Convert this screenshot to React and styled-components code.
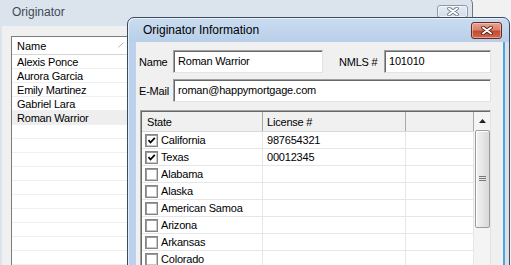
import React from 'react';
import styled, { createGlobalStyle } from 'styled-components';

const Global = createGlobalStyle`
  html, body { margin: 0; padding: 0; }
  body {
    width: 511px; height: 265px; overflow: hidden;
    background: #f0f0f0;
    font-family: "Liberation Sans", Arial, sans-serif;
    font-size: 11px; color: #000;
  }
`;

const Desktop = styled.div`
  position: relative;
  width: 511px; height: 265px;
  overflow: hidden;
  background: #f1f1f1;
`;

const Window = styled.div`
  position: absolute;
  left: ${p => p.$left}px; top: ${p => p.$top}px;
  width: ${p => p.$width}px; height: ${p => p.$height}px;
  box-sizing: border-box;
  border: 1px solid ${p => (p.$active ? '#3a4b60' : '#6e7884')};
  border-radius: 7px 7px 0 0;
  background: ${p => (p.$active
    ? 'linear-gradient(#cadcf0 0px, #b8cfe9 24px) top / 100% 24px no-repeat, linear-gradient(90deg, #bcd2ec 0 8px, #dcdfe3 8px)'
    : '#dbe4ed')};
  box-shadow: inset 1px 1px 0 rgba(255,255,255,0.6);
  display: flex; flex-direction: column;
  padding: 0 ${p => p.$frameR}px 0 ${p => p.$frameL}px;
`;

const TitleBar = styled.div`
  height: ${p => p.$h}px;
  flex: none;
  display: flex; align-items: center;
  padding-left: ${p => p.$pad}px;
  font-size: 12px;
  color: ${p => (p.$active ? '#000' : '#404a56')};
`;

const CloseBtn = styled.div`
  position: absolute;
  right: ${p => p.$right}px; top: ${p => p.$top}px;
  width: ${p => p.$w}px; height: ${p => p.$h}px;
  box-sizing: border-box;
  border-radius: 3px;
  border: 1px solid ${p => (p.$active ? '#6b2a20' : '#8d99a6')};
  background: ${p => (p.$active
    ? 'linear-gradient(#e5a393 0%, #d9826f 45%, #c34a32 55%, #cf6a4f 100%)'
    : 'linear-gradient(#e4ebf2, #d3dde8)')};
  box-shadow: inset 0 0 0 1px ${p => (p.$active ? 'rgba(255,220,210,0.5)' : 'rgba(255,255,255,0.6)')};
  display: flex; align-items: center; justify-content: center;
`;

const Content = styled.div`
  flex: 1;
  background: #f0f0f0;
  display: flex; flex-direction: column;
  padding: ${p => p.$pad};
  border-right: ${p => (p.$edge ? '2px solid #4ea3e2' : 'none')};
`;

/* background list */
const List = styled.div`
  width: 130px;
  flex: 1;
  background: #fff;
  border: 1px solid #7c7c7c;
  box-shadow: inset 1px 1px 0 #a0a0a0;
  display: flex; flex-direction: column;
`;

const ListHeader = styled.div`
  position: relative;
  height: 18px;
  box-sizing: border-box;
  border-bottom: 1px solid #d5d5d5;
  display: flex; align-items: center;
  padding-left: 5px;
  background: #fff;
`;

const SortMark = styled.svg`
  position: absolute;
  left: 106px; top: 5px;
`;

const ListRow = styled.div`
  height: 14px;
  box-sizing: border-box;
  border-bottom: 1px solid #efefef;
  padding-left: 5px;
  display: flex; align-items: center;
  letter-spacing: -0.2px;
  background: ${p => (p.$selected ? '#eeeeee' : '#fff')};
`;

/* form */
const FormRow = styled.div`
  display: flex; align-items: center;
  height: 23px;
  margin-top: ${p => p.$mt || 0}px;
`;

const Label = styled.div`
  width: ${p => p.$w}px;
  margin-left: ${p => p.$ml || 0}px;
  flex: none;
  letter-spacing: -0.2px;
`;

const Input = styled.div`
  width: ${p => p.$w}px;
  height: 23px;
  box-sizing: border-box;
  flex: none;
  background: #fff;
  border-top: 1px solid #a0a0a0;
  border-left: 1px solid #a0a0a0;
  border-right: 1px solid #e3e3e3;
  border-bottom: 1px solid #e3e3e3;
  box-shadow: inset 1px 1px 0 #696969;
  padding: 4px 0 0 4px;
  letter-spacing: -0.2px;
  white-space: nowrap; overflow: hidden;
`;

/* grid */
const Grid = styled.div`
  margin: 8px 0 0 1px;
  width: 351px;
  flex: 1;
  box-sizing: border-box;
  border-top: 1px solid #a0a0a0;
  border-left: 1px solid #a0a0a0;
  border-right: 1px solid #e3e3e3;
  box-shadow: inset 1px 1px 0 #696969;
  background: #fff;
  display: flex;
  padding: 1px 0 0 1px;
`;

const Table = styled.div`
  flex: 1;
  display: flex; flex-direction: column;
`;

const HeaderRow = styled.div`
  display: grid;
  grid-template-columns: 121px 143px 1fr;
  height: 20px;
  flex: none;
  box-sizing: border-box;
  background: #f0f0f0;
  border-bottom: 1px solid #d8d8d8;
`;

const HeaderCell = styled.div`
  display: flex; align-items: center;
  padding-left: ${p => p.$pad}px;
  box-sizing: border-box;
  border-right: 1px solid #a8a8a8;
  letter-spacing: -0.2px;
`;

const Row = styled.div`
  display: grid;
  grid-template-columns: 121px 143px 1fr;
  height: 17px;
  flex: none;
  box-sizing: border-box;
  border-bottom: 1px solid #e6e6e6;
`;

const Cell = styled.div`
  display: flex; align-items: center;
  box-sizing: border-box;
  padding-left: ${p => p.$pad}px;
  border-right: 1px solid #e6e6e6;
  letter-spacing: -0.2px;
  white-space: nowrap;
`;

const Check = styled.span`
  width: 13px; height: 13px;
  box-sizing: border-box;
  margin-right: 3px;
  flex: none;
  border: 1px solid #858585;
  box-shadow: inset 1px 1px 0 #9a9a9a, inset -1px -1px 0 #c8c8c8;
  background: #fff;
  display: flex; align-items: center; justify-content: center;
`;

const ScrollBar = styled.div`
  width: 16px;
  flex: none;
  background: #f4f4f4;
  display: flex; flex-direction: column; align-items: center;
`;

const ScrollUp = styled.div`
  height: 18px; width: 16px;
  display: flex; align-items: center; justify-content: center;
`;

const Thumb = styled.div`
  width: 15px; height: 98px;
  box-sizing: border-box;
  border: 1px solid #9b9b9b;
  border-radius: 2px;
  background: linear-gradient(90deg, #f2f2f2, #e6e6e6 50%, #d8d8d8);
  box-shadow: inset 1px 1px 0 #fff;
  display: flex; align-items: center; justify-content: center;
`;

const CloseX = ({ active }) => (
  <svg width="12" height="9" viewBox="0 0 12 9">
    <path d="M2 1.5 L10 7.5 M10 1.5 L2 7.5" stroke={active ? '#5a1c12' : '#6f7b88'} strokeWidth="3.6" strokeLinecap="round" />
    <path d="M2 1.5 L10 7.5 M10 1.5 L2 7.5" stroke="#fff" strokeWidth="2" strokeLinecap="round" />
  </svg>
);

const CheckMark = () => (
  <svg width="9" height="9" viewBox="0 0 9 9">
    <path d="M1.5 4.2 L3.5 6.5 L7.8 1.8" fill="none" stroke="#000" strokeWidth="1.8" />
  </svg>
);

const names = ['Alexis Ponce', 'Aurora Garcia', 'Emily Martinez', 'Gabriel Lara', 'Roman Warrior'];

const states = [
  ['California', '987654321', true],
  ['Texas', '00012345', true],
  ['Alabama', '', false],
  ['Alaska', '', false],
  ['American Samoa', '', false],
  ['Arizona', '', false],
  ['Arkansas', '', false],
  ['Colorado', '', false],
];

export default function App() {
  return (
    <>
      <Global />
      <Desktop>
        <Window $left={-6} $top={-3} $width={479} $height={300} $frameL={7} $frameR={7}>
          <TitleBar $h={28} $pad={10}>Originator</TitleBar>
          <CloseBtn $right={4} $top={7} $w={31} $h={13}>
            <CloseX />
          </CloseBtn>
          <Content $pad="10px 0 0 9px">
            <List>
              <ListHeader>
                Name
                <SortMark width="6" height="6" viewBox="0 0 6 6">
                  <path d="M0.5 5.5 L5.5 0.5" stroke="#b5b5b5" strokeWidth="1" />
                </SortMark>
              </ListHeader>
              {names.map((n, i) => (
                <ListRow key={n} $selected={i === 4}>{n}</ListRow>
              ))}
              {Array.from({ length: 11 }).map((_, i) => (
                <ListRow key={'e' + i} />
              ))}
            </List>
          </Content>
        </Window>

        <Window $active $left={127} $top={17} $width={383} $height={260} $frameL={8} $frameR={4}>
          <TitleBar $active $h={24} $pad={7}>Originator Information</TitleBar>
          <CloseBtn $active $right={7} $top={4} $w={31} $h={17}>
            <CloseX active />
          </CloseBtn>
          <Content $edge $pad="8px 0 0 3px">
            <FormRow>
              <Label $w={34}>Name</Label>
              <Input $w={150}>Roman Warrior</Input>
              <Label $w={45} $ml={16}>NMLS #</Label>
              <Input $w={107}>101010</Input>
            </FormRow>
            <FormRow $mt={6}>
              <Label $w={34}>E-Mail</Label>
              <Input $w={318}>roman@happymortgage.com</Input>
            </FormRow>
            <Grid>
              <Table>
                <HeaderRow>
                  <HeaderCell $pad={5}>State</HeaderCell>
                  <HeaderCell $pad={4}>License #</HeaderCell>
                  <HeaderCell $pad={4} />
                </HeaderRow>
                {states.map(([s, l, c]) => (
                  <Row key={s}>
                    <Cell $pad={3}>
                      <Check>{c && <CheckMark />}</Check>
                      {s}
                    </Cell>
                    <Cell $pad={4}>{l}</Cell>
                    <Cell />
                  </Row>
                ))}
              </Table>
              <ScrollBar>
                <ScrollUp>
                  <svg width="7" height="4" viewBox="0 0 7 4">
                    <path d="M0 4 L3.5 0 L7 4 Z" fill="#222" />
                  </svg>
                </ScrollUp>
                <Thumb>
                  <svg width="7" height="6" viewBox="0 0 7 6">
                    <path d="M0 0.5 H7 M0 2.5 H7 M0 4.5 H7" stroke="#777" strokeWidth="1" />
                  </svg>
                </Thumb>
              </ScrollBar>
            </Grid>
          </Content>
        </Window>
      </Desktop>
    </>
  );
}
